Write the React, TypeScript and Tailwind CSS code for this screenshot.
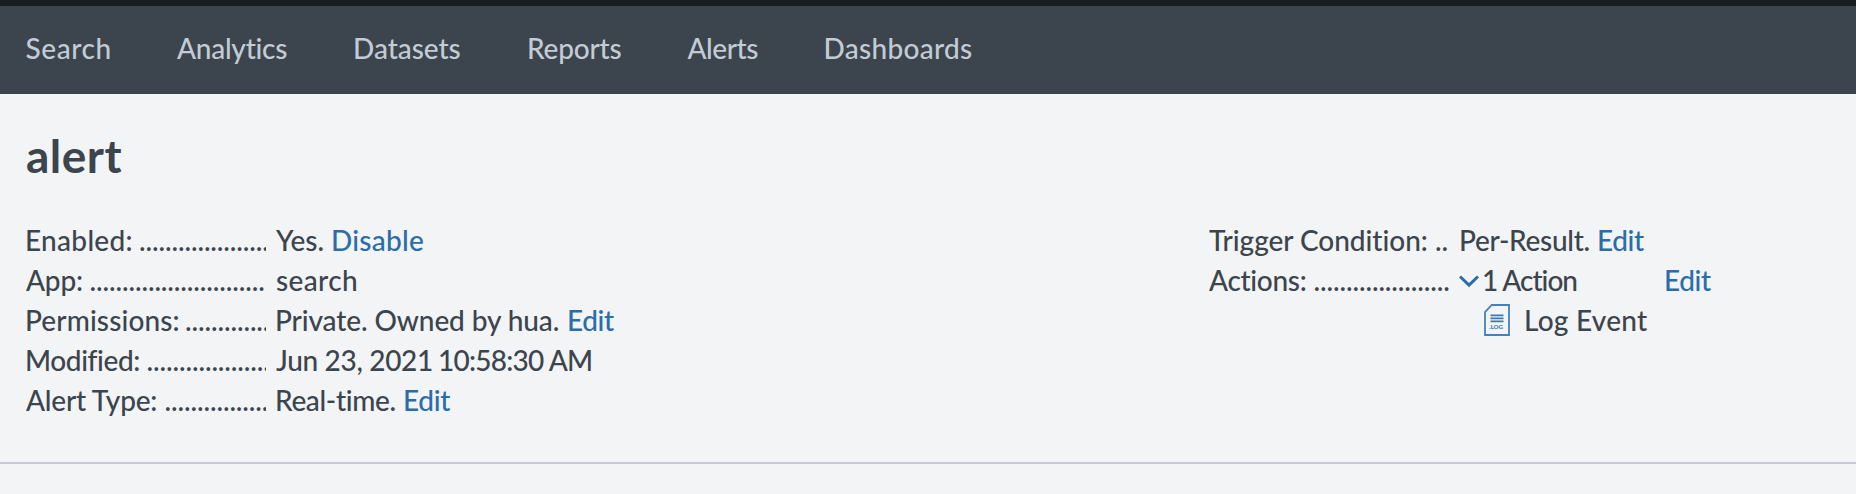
import React from "react";

const navItems = [
  { label: "Search", cls: "w-[151.5px] tracking-[0.58px]" },
  { label: "Analytics", cls: "w-[176px] tracking-[-0.25px]" },
  { label: "Datasets", cls: "w-[174px] tracking-[-0.05px]" },
  { label: "Reports", cls: "w-[160.5px] tracking-[-0.2px]" },
  { label: "Alerts", cls: "w-[136px] tracking-[-0.45px]" },
  { label: "Dashboards", cls: "tracking-[0.29px]" },
];

function Row({
  label,
  labelCls,
  dots = 40,
  children,
}: {
  label: string;
  labelCls: string;
  dots?: number;
  children: React.ReactNode;
}) {
  return (
    <div className="flex h-10">
      <div className="flex w-[240px] shrink-0 overflow-hidden">
        <span className={"shrink-0 " + labelCls}>{label}</span>
        <span className="tracking-[-0.12px]">{".".repeat(dots)}</span>
      </div>
      <div className="ml-[10px] flex">{children}</div>
    </div>
  );
}

function Link({ children, className = "" }: { children: string; className?: string }) {
  return (
    <a href="#" className={"text-[#2b6cab] " + className}>
      {children}
    </a>
  );
}

function LogIcon() {
  return (
    <svg width="26" height="32" viewBox="0 0 26 32" fill="none" className="mt-[4px] ml-[25px] shrink-0">
      <path d="M7.8 1H25v30H1V8.2z" stroke="#4682b8" strokeWidth="1.8" />
      <path d="M6.5 11.4h13M6.5 14.4h13M6.5 17.4h13" stroke="#3a79b3" strokeWidth="1.7" />
      <text x="5" y="25.3" fontFamily="Lato, sans-serif" fontWeight="900" fontSize="6.2" fill="#3a79b3" textLength="14">
        .LOG
      </text>
    </svg>
  );
}

export default function App() {
  return (
    <div className="h-[494px] overflow-hidden bg-[#f2f4f5] font-['Lato',sans-serif] text-[28px] leading-10 font-medium whitespace-nowrap text-[#3c444d]">
      <nav className="flex h-[94px] border-t-6 border-[#171d21] bg-[#3c444d] pt-[22px] pl-[25.5px] text-[#c3cbd4]">
        {navItems.map((n) => (
          <a key={n.label} href="#" className={"shrink-0 " + n.cls}>
            {n.label}
          </a>
        ))}
      </nav>
      <header className="h-[370px] border-b-2 border-[#c3cbd4] pt-[34px] pl-[26px]">
        <h1 className="text-[46px] leading-[56px] font-bold tracking-[0.5px]">alert</h1>
        <div className="mt-[36px] flex">
          <div className="w-[1183px]">
            <Row label="Enabled:" labelCls="w-[114px] ml-[-1px] tracking-[0.3px]">
              <span className="w-[55px] tracking-[0px]">Yes.</span>
              <Link className="tracking-[0.26px]">Disable</Link>
            </Row>
            <Row label="App:" labelCls="w-[63.5px] tracking-[-0.2px]" dots={27}>
              <span className="tracking-[0.38px]">search</span>
            </Row>
            <Row label="Permissions:" labelCls="w-[160px] ml-[-1px] tracking-[0.12px]">
              <span className="-ml-px w-[292px] tracking-[-0.1px]">Private. Owned by hua.</span>
              <Link className="tracking-[-0.38px]">Edit</Link>
            </Row>
            <Row label="Modified:" labelCls="w-[121.5px] ml-[-1px] tracking-[-0.4px]">
              <span className="w-[162px] tracking-[-0.32px]">Jun 23, 2021</span>
              <span className="tracking-[-0.77px]">10:58:30 AM</span>
            </Row>
            <Row label="Alert Type:" labelCls="w-[138.5px] tracking-[-0.22px]">
              <span className="-ml-px w-[128px] tracking-[-0.35px]">Real-time.</span>
              <Link className="tracking-[-0.3px]">Edit</Link>
            </Row>
          </div>
          <div>
            <Row label="Trigger Condition:" labelCls="w-[226px] tracking-[-0.03px]" dots={2}>
              <span className="w-[138px] tracking-[-0.29px]">Per-Result.</span>
              <Link className="tracking-[-0.38px]">Edit</Link>
            </Row>
            <Row label="Actions:" labelCls="w-[104.5px] tracking-[-0.3px]" dots={21}>
              <svg width="20" height="13" viewBox="0 0 20 13" fill="none" className="mt-[15px] mr-[3px] shrink-0">
                <path d="M1 1.5L10 10.2L19 1.5" stroke="#2b6cab" strokeWidth="3" />
              </svg>
              <span className="w-[182px] tracking-[-1px]">1 Action</span>
              <Link className="tracking-[-0.38px]">Edit</Link>
            </Row>
            <div className="flex h-10 pl-[250px]">
              <LogIcon />
              <span className="ml-[14px] tracking-[0.25px]">Log Event</span>
            </div>
          </div>
        </div>
      </header>
    </div>
  );
}
